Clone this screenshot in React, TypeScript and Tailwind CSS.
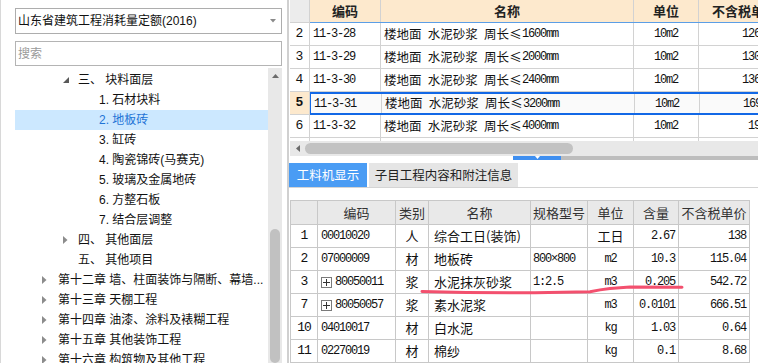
import React from 'react';

const CJK = "font-['Noto_Sans_CJK_SC',sans-serif]";
const MONO = "font-['Liberation_Mono',monospace] text-[12px] tracking-[-1.2px]";

type Arrow = 'open' | 'closed' | 'none';
type Level = 'sec' | 'item' | 'chap';

interface TreeItem {
  lv: Level;
  arrow?: Arrow;
  text: string;
  active?: boolean;
}

const tree: TreeItem[] = [
  { lv: 'sec', arrow: 'open', text: '三、 块料面层' },
  { lv: 'item', text: '1. 石材块料' },
  { lv: 'item', text: '2. 地板砖', active: true },
  { lv: 'item', text: '3. 缸砖' },
  { lv: 'item', text: '4. 陶瓷锦砖(马赛克)' },
  { lv: 'item', text: '5. 玻璃及金属地砖' },
  { lv: 'item', text: '6. 方整石板' },
  { lv: 'item', text: '7. 结合层调整' },
  { lv: 'sec', arrow: 'closed', text: '四、 其他面层' },
  { lv: 'sec', arrow: 'none', text: '五、 其他项目' },
  { lv: 'chap', arrow: 'closed', text: '第十二章 墙、柱面装饰与隔断、幕墙...' },
  { lv: 'chap', arrow: 'closed', text: '第十三章 天棚工程' },
  { lv: 'chap', arrow: 'closed', text: '第十四章 油漆、涂料及裱糊工程' },
  { lv: 'chap', arrow: 'closed', text: '第十五章 其他装饰工程' },
  { lv: 'chap', arrow: 'closed', text: '第十六章 构筑物及其他工程' },
];

const quotas = [
  { n: '2', code: '11-3-28', len: '1600', price: '1263.58' },
  { n: '3', code: '11-3-29', len: '2000', price: '1306.94' },
  { n: '4', code: '11-3-30', len: '2400', price: '1364.27' },
  { n: '5', code: '11-3-31', len: '3200', price: '1692.81', sel: true },
  { n: '6', code: '11-3-32', len: '4000', price: '1928.6' },
  { n: '7', code: '11-3-33', len: '4800', price: '2104.3' },
];

const materials = [
  { n: '1', code: '00010020', kind: '人', name: '综合工日(装饰)', spec: '', unit: '工日', qty: '2.67', price: '138' },
  { n: '2', code: '07000009', kind: '材', name: '地板砖', spec: '800×800', unit: 'm2', qty: '10.3', price: '115.04' },
  { n: '3', code: '80050011', kind: '浆', name: '水泥抹灰砂浆', spec: '1:2.5', unit: 'm3', qty: '0.205', price: '542.72', plus: true },
  { n: '7', code: '80050057', kind: '浆', name: '素水泥浆', spec: '', unit: 'm3', qty: '0.0101', price: '666.51', plus: true },
  { n: '10', code: '04010017', kind: '材', name: '白水泥', spec: '', unit: 'kg', qty: '1.03', price: '0.64' },
  { n: '11', code: '02270019', kind: '材', name: '棉纱', spec: '', unit: 'kg', qty: '0.1', price: '8.68' },
];

function TreeArrow({ kind }: { kind?: Arrow }) {
  if (kind === 'open') {
    return (
      <svg width="6" height="6" viewBox="0 0 6 6">
        <polygon points="6,0 6,6 0,6" fill="#595959" />
      </svg>
    );
  }
  if (kind === 'closed') {
    return (
      <svg width="5" height="8" viewBox="0 0 5 8">
        <polygon points="0,0 4.5,4 0,8" fill="#8c8c8c" />
      </svg>
    );
  }
  return null;
}

function TreeRow({ item }: { item: TreeItem }) {
  const rowCls = item.active ? 'bg-[#cce8ff] text-[#1f74d6]' : 'text-[#111]';
  if (item.lv === 'item') {
    return <div className={`flex h-[20px] items-center whitespace-nowrap pl-[84px] ${rowCls}`}>{item.text}</div>;
  }
  const pad = item.lv === 'sec' ? 'pl-[48px]' : 'pl-[27px]';
  const box = item.lv === 'sec' ? 'w-[15px]' : 'w-[16px]';
  return (
    <div className={`flex h-[20px] items-center whitespace-nowrap ${pad} ${rowCls}`}>
      <span className={`flex ${box} items-center`}>
        <TreeArrow kind={item.arrow} />
      </span>
      {item.text}
    </div>
  );
}

function PlusBox() {
  return (
    <span className="mr-[3px] flex h-[11px] w-[11px] shrink-0 items-center justify-center border border-[#7a7a7a] bg-white">
      <svg width="7" height="7" viewBox="0 0 7 7">
        <path d="M0 3.5H7M3.5 0V7" stroke="#333" strokeWidth="1" />
      </svg>
    </span>
  );
}

const topCell = 'flex h-full shrink-0 items-center border-r border-[#d2d2d2]';
const botCols = ['w-[27px]', 'w-[78px]', 'w-[33px]', 'w-[102px]', 'w-[57px]', 'w-[46px]', 'w-[45px]', 'w-[71px]'];
const botCell = 'flex h-[23px] shrink-0 items-center border-r border-b border-[#c8c8c8]';

export default function App() {
  return (
    <div className="relative flex h-[363px] w-[758px] overflow-hidden bg-white font-['Liberation_Sans','Noto_Sans_CJK_SC',sans-serif] text-[12px]">
      {/* Left: quota library tree */}
      <div className="flex w-[287px] shrink-0 flex-col border-l border-[#d8d8d8] pl-[14px] pr-[5px] pt-[8px]">
        <div className="flex h-[26px] items-center justify-between border border-[#adadad] pl-[2px] pr-[5px] text-[#111]">
          <span>山东省建筑工程消耗量定额(2016)</span>
          <svg width="6" height="4" viewBox="0 0 6 4">
            <polygon points="0,0 6,0 3,3.5" fill="#8a8a8a" />
          </svg>
        </div>
        <div className="mt-[7px] flex h-[25px] items-center border border-[#b4b4b4] px-[2px] text-[#9a9a9a]">搜索</div>
        <div className="mt-[2px] flex min-h-0 flex-1">
          <div className="min-w-0 flex-1 overflow-hidden pt-[2px]">
            {tree.map((t, i) => (
              <TreeRow key={i} item={t} />
            ))}
          </div>
          <div className="flex w-[14px] flex-col bg-[#e8e8e8]">
            <div className="flex h-[14px] items-center justify-center pt-[2px]">
              <svg width="7" height="4" viewBox="0 0 7 4">
                <polygon points="0,4 7,4 3.5,0" fill="#6b6b6b" />
              </svg>
            </div>
            <div className="h-[147px]" />
            <div className="mx-[2px] flex-1 rounded-full bg-[#c1c1c1]" />
          </div>
        </div>
      </div>

      {/* Right: quota list + resource detail */}
      <div className="flex min-w-0 flex-1 flex-col border-l-2 border-[#d0d0d0] pl-px">
        <div className="h-[141px] overflow-hidden">
          <div className="flex h-[23px] w-max">
            <div className="h-full w-[20px] shrink-0 border-r border-b border-[#d2d2d2] bg-[#ececec]" />
            <div className="flex border-b border-[#5b9ee6] bg-[#fde9cd] text-[13px] font-bold text-[#222]">
              <div className={`${topCell} ${CJK} w-[71px] justify-center`}>编码</div>
              <div className={`${topCell} ${CJK} w-[253px] justify-center`}>名称</div>
              <div className={`${topCell} ${CJK} w-[65px] justify-center`}>单位</div>
              <div className={`${topCell} ${CJK} w-[92px] justify-center`}>不含税单价</div>
            </div>
          </div>
          {quotas.map((q) => {
            const cells = (
              <>
                <div className={`${topCell} w-[71px] pl-[3px] ${MONO}`}>{q.code}</div>
                <div className={`${topCell} w-[253px] pl-[3px] whitespace-pre`}>
                  <span className={`${CJK} text-[12.5px]`}>楼地面{'\u2002'}水泥砂浆{'\u2002'}周长</span>
                  <span className={`${CJK} inline-block w-[13px] text-center text-[12.5px]`}>≤</span>
                  <span className={MONO}>{q.len}mm</span>
                </div>
                <div className={`${topCell} w-[65px] justify-center ${MONO}`}>10m2</div>
                <div className={`${topCell} w-[92px] justify-end pr-[6px] ${MONO}`}>{q.price}</div>
              </>
            );
            return (
              <div key={q.n} className="flex h-[23px] w-max text-[#111]">
                <div
                  className={`flex h-full w-[20px] shrink-0 items-center justify-center border-r border-b border-[#d2d2d2] font-['Liberation_Mono',monospace] text-[13px] ${
                    q.sel ? 'bg-[#fde9cd] font-bold' : ''
                  }`}
                >
                  {q.n}
                </div>
                {q.sel ? (
                  <div className="flex h-full border-y-2 border-l border-[#1268e6] bg-[#fafafa]">{cells}</div>
                ) : (
                  <div className="flex h-full border-b border-[#d2d2d2]">{cells}</div>
                )}
              </div>
            );
          })}
        </div>

        {/* horizontal scrollbar */}
        <div className="flex h-[15px] items-center bg-[#e8e8e8]">
          <span className="flex w-[15px] justify-center">
            <svg width="4" height="7" viewBox="0 0 4 7">
              <polygon points="4,0 4,7 0,3.5" fill="#6b6b6b" />
            </svg>
          </span>
          <div className="h-[11px] w-[268px] rounded-full bg-[#c2c2c2]" />
        </div>

        {/* splitter */}
        <div className="flex h-[4px]">
          <div className="w-[223px]" />
          <div className="flex w-[48px] justify-center bg-[#3f8ff0]">
            <svg width="5" height="3" viewBox="0 0 5 3">
              <polygon points="0,0 5,0 2.5,3" fill="#ffffff" />
            </svg>
          </div>
          <div className="flex-1 bg-[#bdbdbd]" />
        </div>

        {/* tabs */}
        <div className={`ml-[-1px] mt-[3px] flex h-[24px] gap-[2px] text-[12.5px] ${CJK}`}>
          <div className="flex w-[78px] items-center justify-center bg-[#4a9cf4] text-white">工料机显示</div>
          <div className="flex w-[149px] items-center justify-center bg-[#e5e5e5] text-[#222]">子目工程内容和附注信息</div>
        </div>
        <div className="ml-[-1px] h-px bg-[#d4d4d4]" />

        {/* resource table */}
        <div className="mt-[12px] w-max border-t border-l border-[#c8c8c8]">
          <div className={`flex ${CJK} text-[13px] text-[#333]`}>
            {['', '编码', '类别', '名称', '规格型号', '单位', '含量', '不含税单价'].map((h, i) => (
              <div key={i} className={`${botCols[i]} flex h-[24px] shrink-0 items-center justify-center border-r border-b border-[#c8c8c8] bg-[#e9e9e9]`}>
                {h}
              </div>
            ))}
          </div>
          {materials.map((m) => (
            <div key={m.n} className="flex text-[#111]">
              <div className={`${botCell} ${botCols[0]} justify-center font-['Liberation_Mono',monospace] text-[13px] tracking-[-1px]`}>{m.n}</div>
              <div className={`${botCell} ${botCols[1]} pl-[3px] ${MONO}`}>
                {m.plus && <PlusBox />}
                {m.code}
              </div>
              <div className={`${botCell} ${botCols[2]} justify-center ${CJK} text-[13px]`}>{m.kind}</div>
              <div className={`${botCell} ${botCols[3]} pl-[5px] ${CJK} text-[13px]`}>{m.name}</div>
              <div className={`${botCell} ${botCols[4]} pl-[2px] ${MONO}`}>{m.spec}</div>
              <div className={`${botCell} ${botCols[5]} justify-center ${m.unit === '工日' ? `${CJK} text-[13px]` : MONO}`}>{m.unit}</div>
              <div className={`${botCell} ${botCols[6]} justify-end pr-[3px] ${MONO}`}>{m.qty}</div>
              <div className={`${botCell} ${botCols[7]} justify-end pr-[3px] ${MONO}`}>{m.price}</div>
            </div>
          ))}
        </div>
      </div>

      {/* hand-drawn red underline annotation */}
      <svg className="pointer-events-none absolute left-0 top-0" width="758" height="363" viewBox="0 0 758 363">
        <path
          d="M422 291.5 Q480 293.2 535 292.7 L590 291.8 Q600 289.6 610 288.5 L630 287 L682 287.2"
          fill="none"
          stroke="#f3506e"
          strokeWidth="3"
          strokeLinecap="round"
        />
      </svg>
    </div>
  );
}
